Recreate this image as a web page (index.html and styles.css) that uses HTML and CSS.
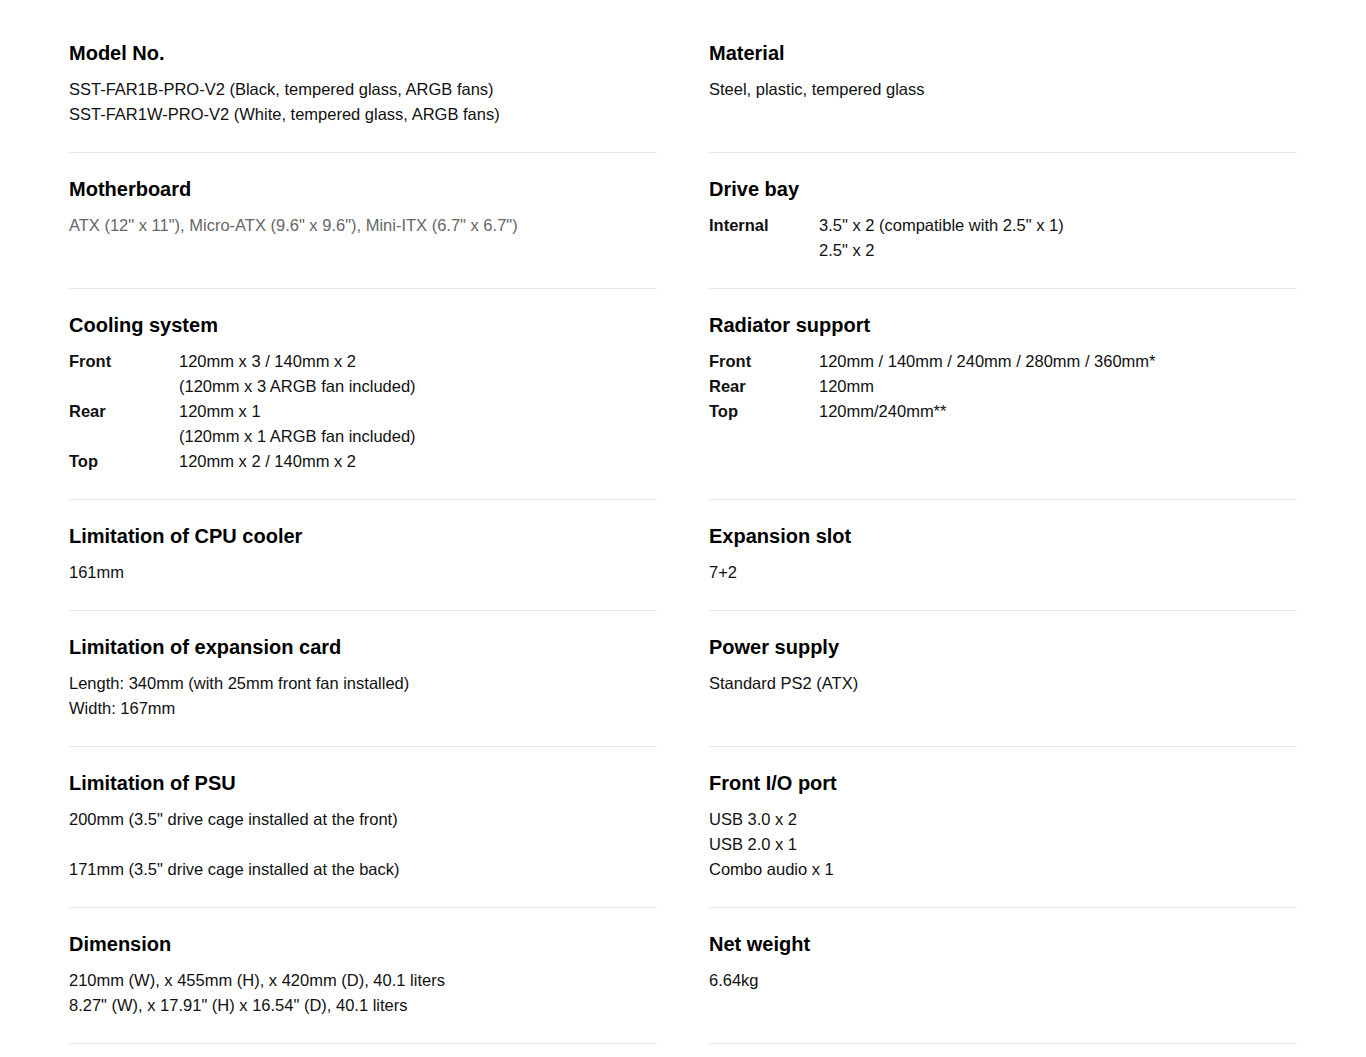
FILE: index.html
```html
<!DOCTYPE html>
<html lang="en">
<head>
<meta charset="utf-8">
<title>Specifications</title>
<link rel="stylesheet" href="styles.css">
</head>
<body>
<div class="specs">
  <div class="cell">
    <h3>Model No.</h3>
    <p>SST-FAR1B-PRO-V2 (Black, tempered glass, ARGB fans)<br>SST-FAR1W-PRO-V2 (White, tempered glass, ARGB fans)</p>
  </div>
  <div class="cell">
    <h3>Material</h3>
    <p>Steel, plastic, tempered glass</p>
  </div>

  <div class="cell">
    <h3>Motherboard</h3>
    <p class="muted">ATX (12" x 11"), Micro-ATX (9.6" x 9.6"), Mini-ITX (6.7" x 6.7")</p>
  </div>
  <div class="cell">
    <h3>Drive bay</h3>
    <div class="kv">
      <span class="k">Internal</span><span class="v">3.5" x 2 (compatible with 2.5" x 1)<br>2.5" x 2</span>
    </div>
  </div>

  <div class="cell">
    <h3>Cooling system</h3>
    <div class="kv">
      <span class="k">Front</span><span class="v">120mm x 3 / 140mm x 2<br>(120mm x 3 ARGB fan included)</span>
      <span class="k">Rear</span><span class="v">120mm x 1<br>(120mm x 1 ARGB fan included)</span>
      <span class="k">Top</span><span class="v">120mm x 2 / 140mm x 2</span>
    </div>
  </div>
  <div class="cell">
    <h3>Radiator support</h3>
    <div class="kv">
      <span class="k">Front</span><span class="v">120mm / 140mm / 240mm / 280mm / 360mm*</span>
      <span class="k">Rear</span><span class="v">120mm</span>
      <span class="k">Top</span><span class="v">120mm/240mm**</span>
    </div>
  </div>

  <div class="cell">
    <h3>Limitation of CPU cooler</h3>
    <p>161mm</p>
  </div>
  <div class="cell">
    <h3>Expansion slot</h3>
    <p>7+2</p>
  </div>

  <div class="cell">
    <h3>Limitation of expansion card</h3>
    <p>Length: 340mm (with 25mm front fan installed)<br>Width: 167mm</p>
  </div>
  <div class="cell">
    <h3>Power supply</h3>
    <p>Standard PS2 (ATX)</p>
  </div>

  <div class="cell">
    <h3>Limitation of PSU</h3>
    <p>200mm (3.5" drive cage installed at the front)</p>
    <p class="spaced">171mm (3.5" drive cage installed at the back)</p>
  </div>
  <div class="cell">
    <h3>Front I/O port</h3>
    <p>USB 3.0 x 2<br>USB 2.0 x 1<br>Combo audio x 1</p>
  </div>

  <div class="cell">
    <h3>Dimension</h3>
    <p>210mm (W), x 455mm (H), x 420mm (D), 40.1 liters<br>8.27" (W), x 17.91" (H) x 16.54" (D), 40.1 liters</p>
  </div>
  <div class="cell">
    <h3>Net weight</h3>
    <p>6.64kg</p>
  </div>
</div>
</body>
</html>
```

FILE: styles.css
```css
html, body {
  margin: 0;
  padding: 0;
  background: #ffffff;
}

body {
  font-family: "Liberation Sans", Arial, sans-serif;
  color: #111111;
  font-size: 16.5px;
  line-height: 25px;
}

.specs {
  width: 1228px;
  margin: 0 auto;
  padding-top: 17px;
  display: grid;
  grid-template-columns: 1fr 1fr;
  column-gap: 52px;
}

.cell {
  padding: 24px 0 25px 0;
  border-bottom: 1px solid #e6e6e6;
}

.cell h3 {
  margin: 0 0 12px 0;
  font-size: 20px;
  line-height: 24px;
  font-weight: 700;
  color: #000000;
}

.cell p {
  margin: 0;
}

.cell p.spaced {
  margin-top: 25px;
}

.cell p.muted {
  color: #666666;
}

.kv {
  display: grid;
  grid-template-columns: 110px auto;
}

.kv .k {
  font-weight: 700;
}
```
